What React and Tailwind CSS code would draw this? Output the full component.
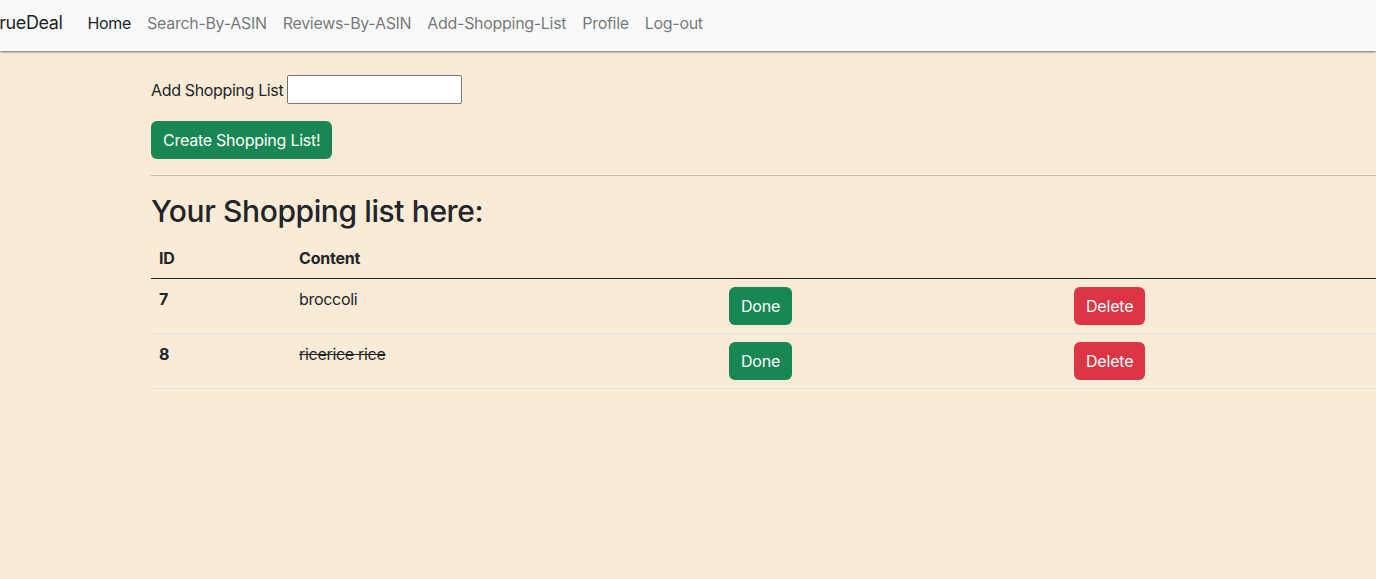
export default function App() {
  const items = [
    { id: 7, content: 'broccoli', done: false },
    { id: 8, content: 'ricerice rice', done: true },
  ];
  const links = ['Search-By-ASIN', 'Reviews-By-ASIN', 'Add-Shopping-List', 'Profile', 'Log-out'];

  return (
    <div className="w-screen min-h-screen overflow-hidden bg-[#faebd7] text-[#212529] font-['Inter',sans-serif] text-base">
      {/* Navbar */}
      <nav className="h-[51px] bg-[#f8f9fa] flex items-start pt-[10px] shadow-[0_1px_2px_rgba(0,0,0,0.55)] relative">
        <span className="ml-[-11px] text-[18px] leading-[26px] text-black/90 tracking-[-0.4px]">TrueDeal</span>
        <div className="flex items-center ml-[17px] leading-[26px]">
          <a className="text-black/90 px-2 tracking-[-0.3px]">Home</a>
          {links.map((l) => (
            <a key={l} className="text-black/55 px-2 tracking-[-0.3px]">{l}</a>
          ))}
        </div>
      </nav>

      {/* Content */}
      <div className="pl-[151px] pt-[24px]">
        <div className="flex items-center gap-1">
          <label className="text-base tracking-[-0.35px]">Add Shopping List</label>
          <input type="text" className="w-[175px] h-[29px] bg-white border border-[#767676] rounded-[2px]" />
        </div>
        <button className="mt-[17px] h-[38px] px-3 bg-[#198754] text-white rounded-md tracking-[-0.25px]">
          Create Shopping List!
        </button>
        <hr className="mt-4 mb-4 border-t border-[#212529]/25" />
        <h2 className="text-[30px] leading-[38px] font-medium mb-2 tracking-[-0.4px]">Your Shopping list here:</h2>
        <table className="table-fixed w-[1260px] border-collapse">
          <colgroup>
            <col className="w-[140px]" />
            <col className="w-[430px]" />
            <col className="w-[345px]" />
            <col className="w-[345px]" />
          </colgroup>
          <thead>
            <tr className="border-b border-[#212529]">
              <th className="text-left p-2 font-bold leading-6 tracking-[-0.2px]">ID</th>
              <th className="text-left p-2 font-bold leading-6 tracking-[-0.2px]">Content</th>
              <th className="p-2"></th>
              <th className="p-2"></th>
            </tr>
          </thead>
          <tbody>
            {items.map((it) => (
              <tr key={it.id} className="border-b border-[#dee2e6]">
                <td className="p-2 font-bold align-top leading-6">{it.id}</td>
                <td className={`p-2 align-top leading-6 tracking-[-0.3px] ${it.done ? 'line-through' : ''}`}>{it.content}</td>
                <td className="p-2 align-top">
                  <button className="h-[38px] px-3 bg-[#198754] text-white rounded-md tracking-[-0.2px]">Done</button>
                </td>
                <td className="p-2 align-top">
                  <button className="h-[38px] px-3 bg-[#dc3545] text-white rounded-md tracking-[-0.2px]">Delete</button>
                </td>
              </tr>
            ))}
          </tbody>
        </table>
      </div>
    </div>
  );
}
